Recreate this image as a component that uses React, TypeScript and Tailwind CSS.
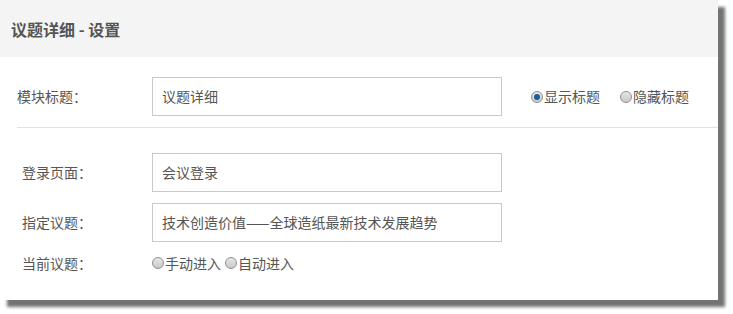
const Radio = ({ checked = false }: { checked?: boolean }) => (
  <span className="inline-flex items-center justify-center w-[12px] h-[12px] rounded-full border border-[#8f8f8f] bg-gradient-to-b from-[#e6e6e6] to-[#c9c9c9] shrink-0">
    {checked && <span className="w-[6px] h-[6px] rounded-full bg-[#1a5c9e]" />}
  </span>
);

const Field = ({ value }: { value: string }) => (
  <div className="w-[350px] h-[39px] border border-[#c9c9c9] bg-white flex items-center px-[9px] text-[14px] text-[#555]">
    {value}
  </div>
);

export default function App() {
  return (
    <div
      className="w-[733px] h-[314px] bg-white"
      style={{ fontFamily: '"Noto Sans CJK SC", "Microsoft YaHei", sans-serif' }}
    >
      <div className="w-[718px] h-[300px] bg-white shadow-[7px_7px_3px_rgba(0,0,0,0.55)]">
        <div className="h-[57px] bg-[#f4f4f4] flex items-center px-[11px]">
          <h1 className="text-[16px] font-bold text-[#555]">议题详细 - 设置</h1>
        </div>

        <div className="pt-[20px]">
          <div className="flex items-center pl-[17px]">
            <span className="w-[135px] text-[14px] text-[#555]">模块标题：</span>
            <Field value="议题详细" />
            <div className="flex items-center ml-[29px] text-[14px] text-[#555]">
              <Radio checked />
              <span className="ml-[1px]">显示标题</span>
              <span className="ml-[20px]" />
              <Radio />
              <span className="ml-[1px]">隐藏标题</span>
            </div>
          </div>

          <div className="ml-[17px] mt-[11px] border-t border-[#e2e2e2]" />

          <div className="flex flex-col gap-[11px] pt-[25px] pl-[22px]">
            <div className="flex items-center">
              <span className="w-[130px] text-[14px] text-[#555]">登录页面：</span>
              <Field value="会议登录" />
            </div>
            <div className="flex items-center">
              <span className="w-[130px] text-[14px] text-[#555]">指定议题：</span>
              <Field value="技术创造价值——全球造纸最新技术发展趋势" />
            </div>
            <div className="flex items-center h-[20px]">
              <span className="w-[130px] text-[14px] text-[#555]">当前议题：</span>
              <div className="flex items-center text-[14px] text-[#555]">
                <Radio />
                <span className="ml-[1px]">手动进入</span>
                <span className="ml-[4px]" />
                <Radio />
                <span className="ml-[1px]">自动进入</span>
              </div>
            </div>
          </div>
        </div>
      </div>
    </div>
  );
}
